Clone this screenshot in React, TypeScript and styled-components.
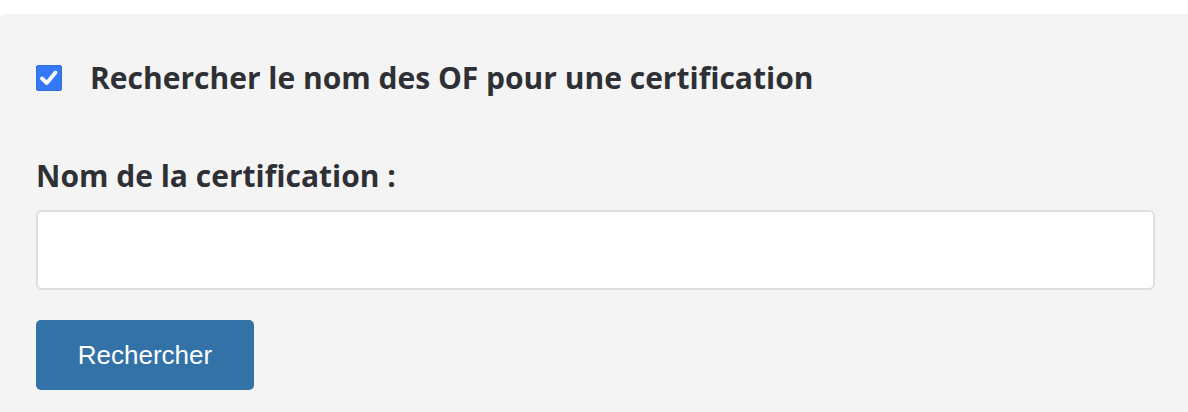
import React from "react";
import styled, { createGlobalStyle } from "styled-components";

const Global = createGlobalStyle`
  html, body { margin: 0; padding: 0; background: #ffffff; }
  body { font-family: "Open Sans", "Liberation Sans", sans-serif; }
`;

const Panel = styled.section`
  margin-top: 14px;
  background: #f4f4f4;
  border-radius: 5px 0 0 0;
  padding: 48px 33px 22px 36px;
  display: flex;
  flex-direction: column;
  min-height: 300px;
`;

const CheckRow = styled.label`
  display: flex;
  align-items: center;
  gap: 28px;
  color: #2f3035;
  font-size: 30px;
  font-weight: 700;
  line-height: 32px;
`;

const Box = styled.span`
  width: 26px;
  height: 26px;
  box-sizing: border-box;
  background: #3478f6;
  border: 1px solid #2f6de0;
  border-radius: 2px;
  display: flex;
  align-items: center;
  justify-content: center;
  flex: none;
`;

const FieldLabel = styled.div`
  margin-top: 66px;
  color: #2f3035;
  font-size: 30px;
  font-weight: 700;
  line-height: 32px;
`;

const Input = styled.input`
  margin-top: 18px;
  height: 80px;
  box-sizing: border-box;
  background: #ffffff;
  border: 2px solid #dedede;
  border-radius: 6px;
  width: 100%;
  font-size: 20px;
  padding: 0 12px;
`;

const Button = styled.button`
  margin-top: 30px;
  align-self: flex-start;
  width: 218px;
  height: 70px;
  border: none;
  border-radius: 5px;
  background: #3272a7;
  color: #ffffff;
  font-family: "Liberation Sans", Arial, sans-serif;
  font-size: 26px;
`;

export default function App() {
  return (
    <>
      <Global />
      <Panel>
        <CheckRow>
          <Box>
            <svg width="22" height="22" viewBox="0 0 22 22">
              <path d="M4 11.5 L8.8 16 L17.5 5.5" fill="none" stroke="#fff" strokeWidth="3.8" strokeLinecap="round" strokeLinejoin="round" />
            </svg>
          </Box>
          Rechercher le nom des OF pour une certification
        </CheckRow>
        <FieldLabel>Nom de la certification :</FieldLabel>
        <Input type="text" />
        <Button>Rechercher</Button>
      </Panel>
    </>
  );
}
